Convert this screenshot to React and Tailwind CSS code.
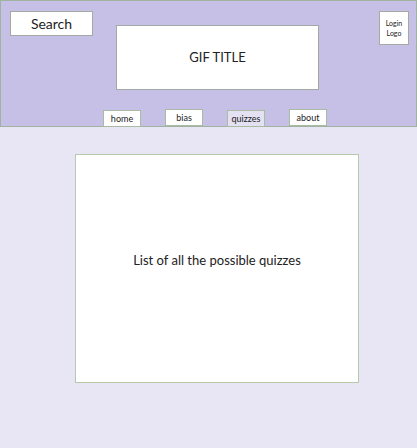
export default function App() {
  const nav = [
    { label: "home", active: false, offset: "mt-[1px]" },
    { label: "bias", active: false, offset: "mt-0" },
    { label: "quizzes", active: true, offset: "mt-[1px]" },
    { label: "about", active: false, offset: "mt-0" },
  ];

  return (
    <div className="min-h-[448px] bg-[#e8e6f4] font-['Lato',sans-serif] text-[#222]">
      <header className="flex h-[127px] flex-col border border-[#9fb3a0] bg-[#c6c0e6] pl-[9px] pr-[7px] pt-[10px]">
        <div className="flex items-start">
          <div className="flex h-[25px] w-[83px] items-center justify-center border border-[#a3aaa3] bg-white text-[14px]">
            Search
          </div>
          <div className="ml-[23px] mt-[14px] flex h-[65px] w-[203px] items-center justify-center border border-[#a3aaa3] bg-white text-[13px]">
            GIF TITLE
          </div>
          <div className="ml-auto flex h-[34px] w-[30px] flex-col items-center justify-center border border-[#a3aaa3] bg-white text-[7px] leading-[10px]">
            <span>Login</span>
            <span>Logo</span>
          </div>
        </div>
        <nav className="-mb-px ml-[93px] mt-auto flex items-start gap-[24px]">
          {nav.map((item) => (
            <div
              key={item.label}
              className={`flex h-[17px] w-[38px] items-center justify-center border border-[#a9bca3] text-[9px] ${item.offset} ${
                item.active ? "bg-[#e3e1f2]" : "bg-white"
              }`}
            >
              {item.label}
            </div>
          ))}
        </nav>
      </header>

      <main className="pt-[27px]">
        <section className="ml-[75px] flex h-[229px] w-[284px] items-center justify-center border border-[#b7c9ab] bg-white pb-[16px] text-[13px]">
          List of all the possible quizzes
        </section>
      </main>
    </div>
  );
}
